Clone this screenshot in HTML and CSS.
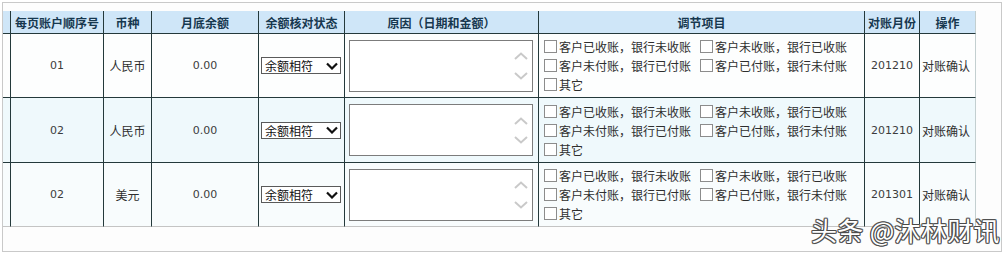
FILE: index.html
```html
<!DOCTYPE html>
<html lang="zh-CN">
<head>
<meta charset="utf-8">
<title>对账</title>
<link rel="stylesheet" href="styles.css">
</head>
<body>
<div class="frame">
  <div class="grid">
    <div class="row head">
      <div class="c c0"></div>
      <div class="c">每页账户顺序号</div>
      <div class="c">币种</div>
      <div class="c">月底余额</div>
      <div class="c">余额核对状态</div>
      <div class="c">原因（日期和金额）</div>
      <div class="c">调节项目</div>
      <div class="c">对账月份</div>
      <div class="c last">操作</div>
    </div>

    <div class="row r1">
      <div class="c c0"></div>
      <div class="c num">01</div>
      <div class="c">人民币</div>
      <div class="c num">0.00</div>
      <div class="c left"><div class="sel"><span>余额相符</span><svg width="12" height="8" viewBox="0 0 12 8"><path d="M1 1.5 L6 6.5 L11 1.5" fill="none" stroke="#111" stroke-width="2.2"/></svg></div></div>
      <div class="c left"><div class="ta"><div class="arrows"><svg width="14" height="8" viewBox="0 0 14 8"><path d="M1 7 L7 1.5 L13 7" fill="none" stroke="#c9c9c9" stroke-width="2"/></svg><svg width="14" height="8" viewBox="0 0 14 8"><path d="M1 1 L7 6.5 L13 1" fill="none" stroke="#c9c9c9" stroke-width="2"/></svg></div></div></div>
      <div class="c opts">
        <div class="line"><label class="opt"><span class="cb"></span>客户已收账，银行未收账</label><label class="opt"><span class="cb"></span>客户未收账，银行已收账</label></div>
        <div class="line"><label class="opt"><span class="cb"></span>客户未付账，银行已付账</label><label class="opt"><span class="cb"></span>客户已付账，银行未付账</label></div>
        <div class="line"><label class="opt"><span class="cb"></span>其它</label></div>
      </div>
      <div class="c num">201210</div>
      <div class="c act last">对账确认</div>
    </div>

    <div class="row r2">
      <div class="c c0"></div>
      <div class="c num">02</div>
      <div class="c">人民币</div>
      <div class="c num">0.00</div>
      <div class="c left"><div class="sel"><span>余额相符</span><svg width="12" height="8" viewBox="0 0 12 8"><path d="M1 1.5 L6 6.5 L11 1.5" fill="none" stroke="#111" stroke-width="2.2"/></svg></div></div>
      <div class="c left"><div class="ta"><div class="arrows"><svg width="14" height="8" viewBox="0 0 14 8"><path d="M1 7 L7 1.5 L13 7" fill="none" stroke="#c9c9c9" stroke-width="2"/></svg><svg width="14" height="8" viewBox="0 0 14 8"><path d="M1 1 L7 6.5 L13 1" fill="none" stroke="#c9c9c9" stroke-width="2"/></svg></div></div></div>
      <div class="c opts">
        <div class="line"><label class="opt"><span class="cb"></span>客户已收账，银行未收账</label><label class="opt"><span class="cb"></span>客户未收账，银行已收账</label></div>
        <div class="line"><label class="opt"><span class="cb"></span>客户未付账，银行已付账</label><label class="opt"><span class="cb"></span>客户已付账，银行未付账</label></div>
        <div class="line"><label class="opt"><span class="cb"></span>其它</label></div>
      </div>
      <div class="c num">201210</div>
      <div class="c act last">对账确认</div>
    </div>

    <div class="row r3">
      <div class="c c0"></div>
      <div class="c num">02</div>
      <div class="c">美元</div>
      <div class="c num">0.00</div>
      <div class="c left"><div class="sel"><span>余额相符</span><svg width="12" height="8" viewBox="0 0 12 8"><path d="M1 1.5 L6 6.5 L11 1.5" fill="none" stroke="#111" stroke-width="2.2"/></svg></div></div>
      <div class="c left"><div class="ta"><div class="arrows"><svg width="14" height="8" viewBox="0 0 14 8"><path d="M1 7 L7 1.5 L13 7" fill="none" stroke="#c9c9c9" stroke-width="2"/></svg><svg width="14" height="8" viewBox="0 0 14 8"><path d="M1 1 L7 6.5 L13 1" fill="none" stroke="#c9c9c9" stroke-width="2"/></svg></div></div></div>
      <div class="c opts">
        <div class="line"><label class="opt"><span class="cb"></span>客户已收账，银行未收账</label><label class="opt"><span class="cb"></span>客户未收账，银行已收账</label></div>
        <div class="line"><label class="opt"><span class="cb"></span>客户未付账，银行已付账</label><label class="opt"><span class="cb"></span>客户已付账，银行未付账</label></div>
        <div class="line"><label class="opt"><span class="cb"></span>其它</label></div>
      </div>
      <div class="c num">201301</div>
      <div class="c act last">对账确认</div>
    </div>
  </div>
  <div class="mark">头条 @沐林财讯</div>
</div>
</body>
</html>
```

FILE: styles.css
```css
html, body {
  margin: 0;
  padding: 0;
  background: #ffffff;
}

body {
  font-family: "Noto Sans CJK SC", "DejaVu Sans", sans-serif;
  font-size: 12px;
  color: #2e2e2e;
}

.frame {
  position: relative;
  margin: 2px;
  width: 998px;
  height: 240px;
  border: 1px solid #c9c9c9;
  background: #fdfdfd;
  padding-top: 8px;
  box-sizing: content-box;
}

.grid {
  display: flex;
  flex-direction: column;
  width: 973px;
}

.row {
  display: grid;
  grid-template-columns: 7px 93px 48px 107px 86px 194px 326px 55px 57px;
}

.c {
  box-sizing: border-box;
  border-left: 1px solid #24393b;
  border-bottom: 1px solid #24393b;
  display: flex;
  align-items: center;
  justify-content: center;
  white-space: nowrap;
  line-height: 19px;
}

.c0 {
  border-left: none;
}

.last {
  border-right: 1px solid #c3cfd0;
}

.head {
  height: 23px;
  background: #cfe6f8;
}

.head .c {
  font-weight: 700;
  color: #17384f;
  font-size: 12px;
}

.r1 { height: 64px; background: #fdfefe; }
.r2 { height: 65px; background: #eff9fc; }
.r3 { height: 64px; background: #f8fcfd; }

.r3 .c {
  border-bottom-color: #c4c4c4;
}

.num {
  font-family: "DejaVu Sans", Verdana, sans-serif;
  font-size: 11px;
  color: #3c3c3c;
}

.left {
  justify-content: flex-start;
}

.act {
  justify-content: flex-start;
  padding-left: 2px;
}

.sel {
  margin-left: 2px;
  width: 80px;
  height: 17px;
  box-sizing: border-box;
  border: 1px solid #5a5a5a;
  background: #fff;
  display: flex;
  align-items: center;
  justify-content: space-between;
  padding: 0 2px 0 3px;
  color: #111;
  line-height: 15px;
}

.sel svg {
  display: block;
}

.ta {
  margin-left: 4px;
  width: 184px;
  height: 52px;
  box-sizing: border-box;
  border: 1px solid #7c7c7c;
  background: #fff;
  display: flex;
  justify-content: flex-end;
}

.arrows {
  width: 18px;
  display: flex;
  flex-direction: column;
  justify-content: space-around;
  align-items: center;
  padding: 6px 0 5px;
  margin-right: 2px;
}

.arrows svg {
  display: block;
}

.opts {
  flex-direction: column;
  align-items: flex-start;
  justify-content: center;
  padding-left: 5px;
}

.line {
  display: flex;
  gap: 9px;
  height: 19px;
  align-items: center;
}

.opt {
  display: flex;
  align-items: center;
  gap: 2px;
  color: #2e2e2e;
}

.cb {
  width: 13px;
  height: 13px;
  box-sizing: border-box;
  border: 1px solid #8c8c8c;
  background: #fff;
  display: inline-block;
}

.mark {
  position: absolute;
  left: 808px;
  top: 211px;
  font-size: 26px;
  line-height: 32px;
  color: #ffffff;
  letter-spacing: 0.3px;
  text-shadow: 1px 0 0 #4a4a4a, -1px 0 0 #4a4a4a, 0 1px 0 #4a4a4a, 0 -1px 0 #4a4a4a, 1px 1px 0 #6a6a6a, -1px -1px 0 #6a6a6a, 1px -1px 0 #6a6a6a, -1px 1px 0 #6a6a6a;
}
```
